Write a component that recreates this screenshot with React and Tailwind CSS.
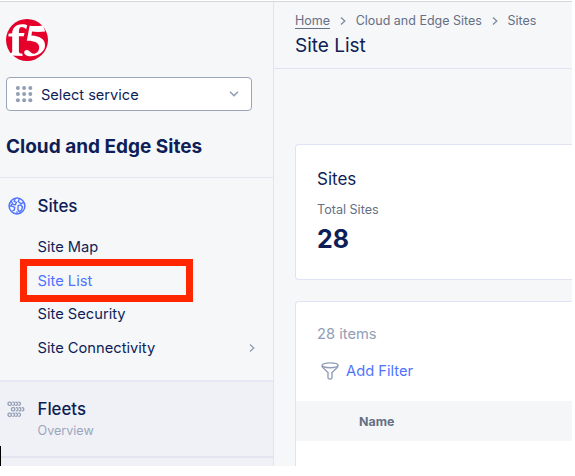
import React from "react";

function Logo() {
  return (
    <svg className="block h-[42px] w-[42px]" viewBox="0 0 42 42">
      <circle cx="21" cy="21" r="21" fill="#e4002b" />
      <path
        d="M2.5 14.8 L6.2 14.3 C6.3 9 9.5 5.4 16 5.2 C18.5 5.1 20.3 5.7 21.2 6.2 L20.2 10.2 C18.5 8.8 16.9 8 15.4 8.1 C13.4 8.3 12.9 10.2 12.9 14 L18.5 14 L17.8 17.2 L12.9 17.3 L12.9 32.2 C12.9 34 13.6 34.4 16.5 34.8 L16.5 37 L3.9 36.6 L3.4 34.8 C5.8 34.2 6.2 33.8 6.2 32 L6.2 17.5 L2.4 17.5 Z"
        fill="#fff"
      />
      <path
        d="M23.6 6.8 C28 7.2 33 7 37 6.4 L39.2 12.5 C35 13 29.5 13 26 12.6 L25.4 16.6 C34 17 39.5 20.5 39 27 C38.6 33 32 37.4 24.5 37.3 C20.5 37.2 18 35.5 18.2 33 C18.5 30.9 21 30.2 23 31.7 C24.4 33 26 34.8 28 34.7 C30.8 34.5 33.3 31.6 33.2 28.2 C33 23.7 28 21.6 20.8 21.8 Z"
        fill="#fff"
      />
    </svg>
  );
}

function Chevron({ className }) {
  return (
    <svg className={className} viewBox="0 0 8 8" fill="none" stroke="currentColor" strokeWidth="1.3">
      <path d="M2 .5 5.8 4 2 7.5" />
    </svg>
  );
}

function ServiceSelect() {
  return (
    <div className="mt-4 ml-1.5 flex h-[34px] w-[246px] items-center rounded-[4px] border border-[#9aa5bb] bg-white pr-3 pl-2">
      <svg className="h-[18px] w-[18px]" viewBox="0 0 18 18" fill="#929eb5">
        {[2.9, 9.1, 15.3].map((y) =>
          [2.9, 9.1, 15.3].map((x) => <circle key={x + "-" + y} cx={x} cy={y} r="2" />)
        )}
      </svg>
      <span className="ml-[8px] grow pt-px text-[14.6px] leading-5">Select service</span>
      <svg className="h-[6px] w-[10px] text-[#929eb5]" viewBox="0 0 10 6" fill="none" stroke="currentColor" strokeWidth="1.5">
        <path d="M1 .8 5 4.6 9 .8" />
      </svg>
    </div>
  );
}

function Globe() {
  return (
    <svg className="h-[18px] w-[18px]" viewBox="0 0 18 18" fill="none" stroke="#4f73ff" strokeWidth="1.35">
      <circle cx="9" cy="9" r="7.9" strokeWidth="1.5" />
      <path d="M3 4.2 4.6 6.4 2.2 9.6 M3.1 8.8 6.8 10.4 6.2 13.2 4.4 13.6 M7.2 1.4 6.2 4.4 8.4 5.3 7.4 7.7 5 7.5 M11.4 1.6 10.3 4.6 13.2 6.7 15.8 5.3 M10.1 8.7 12.6 7.9 14.5 9.8 13.6 13 11.3 14.7 9.9 12.7 Z M9.2 16.6 8.8 14.4" />
    </svg>
  );
}

function FleetsIcon() {
  return (
    <svg className="h-[17px] w-[18px]" viewBox="0 0 18 17" fill="none" stroke="#929eb5" strokeWidth="1.3">
      {[[1, 2.7], [4.4, 8.2], [1, 13.7]].map(([x, y]) => (
        <g key={y} transform={`translate(${x} ${y})`}>
          <rect x="0" y="-1.6" width="3.4" height="3.2" rx="1.4" />
          <path d="M4.4-1.6H5.1Q6.5-1.6 6.5 0T5.1 1.6H4.4M7.3-1.6H8Q9.4-1.6 9.4 0T8 1.6H7.3M10.2-1.6H10.9Q12.4-1.6 12.4 0T10.9 1.6H10.2" />
        </g>
      ))}
    </svg>
  );
}

function Sidebar() {
  return (
    <aside className="flex w-[274px] shrink-0 flex-col border-r border-[#dfe3f3]">
      <div className="h-[176px] shrink-0 border-b border-[#e3e6f2] pt-[17px]">
        <div className="ml-1.5"><Logo /></div>
        <ServiceSelect />
        <h2 className="mt-[24px] ml-1.5 text-[19px] leading-6 font-bold">Cloud and Edge Sites</h2>
      </div>
      <div className="relative h-[204px] shrink-0 border-b-2 border-[#e5e8f2]">
        <div className="flex h-10 items-center pt-[15px] pl-[7.5px]">
          <Globe />
          <span className="ml-[12px] text-[17px] leading-6 font-medium">Sites</span>
        </div>
        <nav className="mt-[13px] pl-[37.5px] text-[14.7px]">
          <div className="h-[33.5px] leading-[33px]">Site Map</div>
          <div className="h-[33.5px] leading-[33px] text-[#4f73ff]">Site List</div>
          <div className="h-[33.5px] leading-[33px]">Site Security</div>
          <div className="flex h-[33.5px] items-center justify-between pr-[17px]">
            <span className="leading-5">Site Connectivity</span>
            <Chevron className="h-2 w-2 text-[#929eb5]" />
          </div>
        </nav>
        <div className="absolute top-[81px] left-[20px] h-[43px] w-[173px] border-[7px] border-[#ff2600]" />
      </div>
      <div className="relative flex grow flex-col bg-[#f0f1f7]">
        <div className="flex h-[76px] shrink-0 border-b-2 border-[#e3e6f0] pt-[15px] pl-[7px]">
          <div className="pt-1"><FleetsIcon /></div>
          <div className="ml-[12.5px]">
            <div className="text-[16.8px] leading-6 font-medium">Fleets</div>
            <div className="mt-px text-[12.6px] leading-[18px] text-[#9aa5bb]">Overview</div>
          </div>
        </div>
        <div className="absolute bottom-0 left-0 h-5 w-px bg-black" />
      </div>
    </aside>
  );
}

function Breadcrumb() {
  return (
    <div className="flex items-center text-[12.5px] leading-4 text-[#667085]">
      <span className="border-b border-[#667085] leading-[14px]">Home</span>
      <Chevron className="mx-[8.8px] h-2 w-2 text-[#7f8aa0]" />
      <span>Cloud and Edge Sites</span>
      <Chevron className="mx-[8.8px] h-2 w-2 text-[#7f8aa0]" />
      <span>Sites</span>
    </div>
  );
}

function FilterIcon() {
  return (
    <svg className="h-[18px] w-[18px]" viewBox="0 0 18 18" fill="none" stroke="#929eb5" strokeWidth="1.4">
      <ellipse cx="9" cy="3.3" rx="8" ry="2.4" />
      <path d="M1 3.8Q1.2 5.1 2.5 6.2L7 10.5V15.8Q7 17 9 17T11 15.8V10.5L15.5 6.2Q16.8 5.1 17 3.8" />
    </svg>
  );
}

export default function App() {
  return (
    <div className="h-[476px] w-[575px] overflow-hidden bg-white font-['Inter',sans-serif] text-[#0f1e57]">
      <div className="flex h-[466px] w-[572px] overflow-hidden border-t border-white bg-[#f5f7f9]">
        <div className="flex w-full border-t border-[#d3d8d9]">
          <Sidebar />
          <main className="flex min-w-0 grow flex-col">
            <header className="h-[67px] shrink-0 border-b border-[#dfe3f3] pt-[11px] pl-[21px]">
              <Breadcrumb />
              <h1 className="mt-[5px] text-[19px] leading-6">Site List</h1>
            </header>
            <section className="mt-[75px] ml-[21px] h-[136px] shrink-0 rounded-l-[4px] border border-r-0 border-[#dfe3f3] bg-white pt-[22px] pl-[21px]">
              <div className="text-[17px] leading-6">Sites</div>
              <div className="mt-[10px] text-[12.6px] leading-[18px] text-[#667085]">Total Sites</div>
              <div className="mt-[5px] text-[25px] leading-[30px] font-bold">28</div>
            </section>
            <section className="mt-[21px] ml-[21px] grow rounded-tl-[4px] border-t border-l border-[#dfe3f3] bg-white">
              <div className="h-[99px] pt-[22px] pl-[21px] text-[14.7px]">
                <div className="leading-5 text-[#929eb5]">28 items</div>
                <div className="mt-[17px] flex items-center pl-[3.5px]">
                  <FilterIcon />
                  <span className="ml-[7.5px] leading-5 text-[#4f73ff]">Add Filter</span>
                </div>
              </div>
              <div className="flex h-10 items-center bg-[#f5f6f8] pt-[2px] pl-[63px] text-[12.4px] font-bold text-[#667085]">Name</div>
            </section>
          </main>
        </div>
      </div>
    </div>
  );
}
